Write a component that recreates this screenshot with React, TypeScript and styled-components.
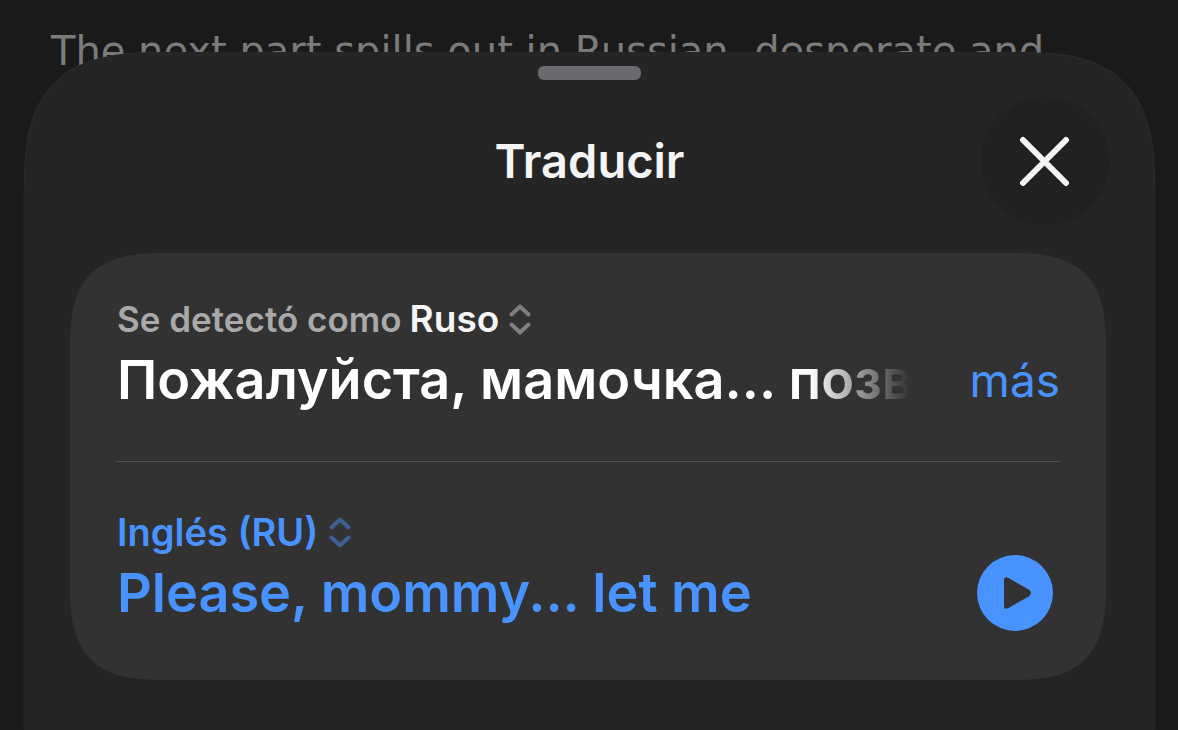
import React from "react";
import styled, { createGlobalStyle } from "styled-components";

const GlobalStyle = createGlobalStyle`
  *, *::before, *::after { box-sizing: border-box; }
  html { background: #1a1a1a; }
  body {
    margin: 0;
    font-family: Inter, "Liberation Sans", sans-serif;
    color: #ffffff;
  }
`;

const Page = styled.div`
  display: flex;
  flex-direction: column;
  min-height: 100vh;
  background: #1a1a1a;
`;

const StoryLine = styled.p`
  margin: 0;
  height: 80px;
  padding: 21px 48px 0 51px;
  overflow: hidden;
  white-space: nowrap;
  font: 40px/60px "DejaVu Sans", sans-serif;
  color: #7b7b7b;
`;

const Sheet = styled.main`
  position: relative;
  flex: 1;
  display: flex;
  flex-direction: column;
  margin: -28px 23px 0 24px;
  padding: 14px 46px 48px;
  background: #252525;
  border-radius: 150px 150px 0 0;
  corner-shape: superellipse(1.6);
  box-shadow: 0 0 1px #4a4a4a;
`;

const Grabber = styled.div`
  align-self: center;
  width: 103px;
  height: 14px;
  border-radius: 6px;
  background: #6b6b6f;
`;

const Header = styled.header`
  display: grid;
  grid-template-columns: 1fr auto 1fr;
  align-items: center;
  margin: 17px 0 28px;
`;

const Title = styled.h1`
  grid-column: 2;
  margin: 0;
  font-size: 47px;
  line-height: 60px;
  font-weight: 600;
  color: #f4f4f4;
`;

const CloseButton = styled.button`
  justify-self: end;
  display: grid;
  place-items: center;
  width: 128px;
  height: 128px;
  padding: 0;
  border: 0;
  border-radius: 50%;
  background: #212121;
  color: #f4f4f4;
`;

const Card = styled.section`
  margin-right: 3px;
  padding: 0 46px;
  background: #323232;
  border-radius: 102px;
  corner-shape: superellipse(1.6);
`;

const Block = styled.div`
  padding: 42px 0 44px;

  & + & {
    padding: 46px 0 50px;
    border-top: 1px solid #515151;
  }
`;

const LabelRow = styled.div`
  display: flex;
  align-items: center;
  gap: 8px;
  height: 48px;
  padding-left: 1px;
`;

const Detected = styled.label`
  font-size: 35px;
  font-weight: 600;
  color: #a9a9a9;
`;

const LanguageSelect = styled.select<{ $accent?: boolean }>`
  appearance: none;
  field-sizing: content;
  margin: 0;
  padding: 0;
  border: 0;
  background: transparent;
  font-family: inherit;
  font-size: ${(p) => (p.$accent ? 38 : 37)}px;
  line-height: 48px;
  font-weight: 600;
  color: ${(p) => (p.$accent ? "#4893ff" : "#f5f5f5")};
`;

const TextRow = styled.div`
  display: flex;
  align-items: center;
  justify-content: space-between;
  height: 74px;
`;

const Phrase = styled.p<{ $accent?: boolean; $fade?: boolean }>`
  flex: 1;
  min-width: 0;
  margin: 0;
  padding-left: 1px;
  white-space: nowrap;
  font-size: 54px;
  line-height: 74px;
  font-weight: 600;
  color: ${(p) => (p.$accent ? "#4893ff" : "#ffffff")};
  ${(p) =>
    p.$fade &&
    "margin-right: 56px; mask-image: linear-gradient(to left, transparent 4px, #000 104px);"}
`;

const MoreButton = styled.button`
  padding: 0;
  border: 0;
  background: transparent;
  font-family: inherit;
  font-size: 46px;
  line-height: 60px;
  color: #4893ff;
`;

const PlayButton = styled.button`
  flex: none;
  width: 76px;
  height: 76px;
  margin-right: 7px;
  padding: 0;
  border: 0;
  border-radius: 50%;
  background: #4893ff;
  color: #323232;

  svg { display: block; }
`;

const Chevrons = ({ color }: { color: string }) => (
  <svg width="26" height="32" viewBox="0 0 26 32" fill="none" stroke={color}
    strokeWidth="4" strokeLinecap="round" strokeLinejoin="round" aria-hidden="true">
    <path d="M4.500 11.500L13 3.500L21.500 11.500M4.500 21.500L13 29.500L21.500 21.500" />
  </svg>
);

export default function App() {
  return (
    <Page>
      <GlobalStyle />
      <StoryLine>The next part spills out in Russian, desperate and</StoryLine>
      <Sheet>
        <Grabber />
        <Header>
          <Title>Traducir</Title>
          <CloseButton type="button" aria-label="Cerrar">
            <svg width="52" height="52" viewBox="0 0 52 52" fill="none" stroke="currentColor"
              strokeWidth="6" strokeLinecap="round">
              <path d="M4 5L47 48M47 5L4 48" />
            </svg>
          </CloseButton>
        </Header>
        <Card>
          <Block>
            <LabelRow>
              <Detected htmlFor="source">Se detectó como</Detected>
              <LanguageSelect id="source" defaultValue="ru">
                <option value="ru">Ruso</option>
              </LanguageSelect>
              <Chevrons color="#808080" />
            </LabelRow>
            <TextRow>
              <Phrase $fade lang="ru">Пожалуйста, мамочка... позв</Phrase>
              <MoreButton type="button">más</MoreButton>
            </TextRow>
          </Block>
          <Block>
            <LabelRow>
              <LanguageSelect $accent aria-label="Idioma de destino" defaultValue="en">
                <option value="en">Inglés (RU)</option>
              </LanguageSelect>
              <Chevrons color="#3c5f94" />
            </LabelRow>
            <TextRow>
              <Phrase $accent lang="en">Please, mommy... let me</Phrase>
              <PlayButton type="button" aria-label="Reproducir">
                <svg width="76" height="76" viewBox="0 0 76 76" fill="currentColor">
                  <path d="M27 25.500Q27 20.800 31.500 23L52 34.800Q56 38 52 41.200L31.500 53Q27 55.200 27 50.500Z" />
                </svg>
              </PlayButton>
            </TextRow>
          </Block>
        </Card>
      </Sheet>
    </Page>
  );
}
